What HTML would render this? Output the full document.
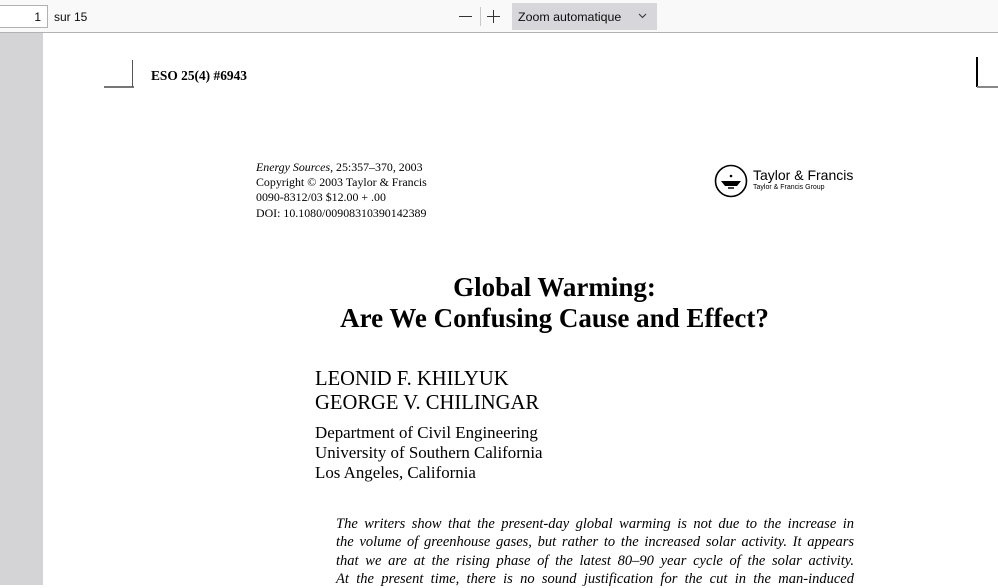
<!DOCTYPE html>
<html><head><meta charset="utf-8"><style>
*{margin:0;padding:0;box-sizing:border-box}
body{width:998px;height:585px;overflow:hidden;background:#fff;position:relative;font-family:"Liberation Serif",serif;color:#000}
.tb{position:absolute;left:0;top:0;width:998px;height:33px;background:#f9f9fa;border-bottom:1px solid #b1b1b3;font-family:"Liberation Sans",sans-serif;font-size:12px;color:#0c0c0d}
.pg{position:absolute;left:-2px;top:5px;width:50px;height:23px;border:1px solid #b1b1b3;background:#fff;text-align:right;padding:4px 6px 0 0}
.sur{position:absolute;left:54px;top:10px}
.zm{position:absolute;left:512px;top:3px;width:145px;height:27px;background:#d7d7db;padding:7px 0 0 6px;font-size:12.4px}
.side{position:absolute;left:0;top:33px;width:43px;height:552px;background:#d4d4d7}
.a{position:absolute;white-space:nowrap}
.ab div{text-align:justify;text-align-last:justify;height:18.3px}
</style></head><body>
<div class="tb">
<div class="pg">1</div><div class="sur">sur 15</div>
<div class="a" style="left:459px;top:16px;width:13px;height:1px;background:#333"></div>
<div class="a" style="left:480px;top:7px;width:1px;height:19px;background:#c8c8c8"></div>
<div class="a" style="left:487px;top:16px;width:13px;height:1px;background:#333"></div>
<div class="a" style="left:493px;top:10px;width:1px;height:13px;background:#333"></div>
<div class="zm">Zoom automatique</div>
<svg class="a" style="left:638px;top:13px" width="9" height="6" viewBox="0 0 9 6"><path d="M1 1 L4.5 4.5 L8 1" fill="none" stroke="#333" stroke-width="1"/></svg>
</div>
<div class="side"></div>
<div class="a" style="left:104px;top:86px;width:30px;height:2px;background:#777"></div>
<div class="a" style="left:132px;top:60px;width:1px;height:27px;background:#555"></div>
<div class="a" style="left:976px;top:57px;width:2px;height:30px;background:#000"></div>
<div class="a" style="left:977px;top:86px;width:21px;height:2px;background:#888"></div>
<div class="a" style="left:151px;top:68px;font-size:13.4px;font-weight:bold">ESO 25(4) #6943</div>
<div class="a" style="left:256px;top:160px;font-size:11.9px;line-height:15.2px"><i>Energy Sources</i>, 25:357–370, 2003<br>Copyright © 2003 Taylor &amp; Francis<br>0090-8312/03 $12.00 + .00<br>DOI: 10.1080/00908310390142389</div>
<svg class="a" style="left:714px;top:164px" width="34" height="34" viewBox="0 0 34 34"><circle cx="17" cy="17" r="15.5" fill="none" stroke="#000" stroke-width="1.6"/><path d="M7 17 H27 L23 22 H11 Z" fill="#000"/><path d="M14 24 H20" stroke="#000" stroke-width="1.5"/><circle cx="17" cy="12" r="1.3" fill="#000"/></svg>
<div class="a" style="left:753px;top:167px;font-family:'Liberation Sans',sans-serif;font-size:14px">Taylor &amp; Francis</div>
<div class="a" style="left:753px;top:184px;font-family:'Liberation Sans',sans-serif;font-size:7px">Taylor &amp; Francis Group</div>
<div class="a" style="left:0;width:1109px;top:272px;text-align:center;font-size:27px;font-weight:bold;line-height:31px">Global Warming:<br>Are We Confusing Cause and Effect?</div>
<div class="a" style="left:315px;top:367px;font-size:20.6px;line-height:24px">LEONID F. KHILYUK<br>GEORGE V. CHILINGAR</div>
<div class="a" style="left:315px;top:423px;font-size:16.9px;line-height:20px">Department of Civil Engineering<br>University of Southern California<br>Los Angeles, California</div>
<div class="a ab" style="left:336px;top:515px;width:518px;white-space:nowrap;font-size:14.5px;line-height:18.3px;font-style:italic">
<div>The writers show that the present-day global warming is not due to the increase in</div>
<div>the volume of greenhouse gases, but rather to the increased solar activity. It appears</div>
<div>that we are at the rising phase of the latest 80–90 year cycle of the solar activity.</div>
<div>At the present time, there is no sound justification for the cut in the man-induced</div>
</div>
</body></html>
